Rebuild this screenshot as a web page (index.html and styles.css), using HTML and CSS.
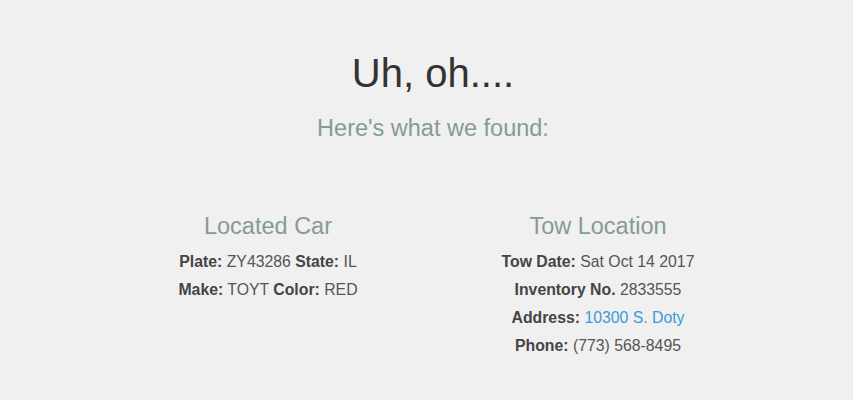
FILE: index.html
```html
<!DOCTYPE html>
<html>
<head>
<meta charset="utf-8">
<link rel="stylesheet" href="styles.css">
</head>
<body>
<main class="page">
  <h1 class="title">Uh, oh....</h1>
  <h2 class="subtitle">Here's what we found:</h2>
  <div class="columns">
    <section class="col">
      <h3 class="col-title">Located Car</h3>
      <p class="line"><b>Plate:</b> ZY43286 <b>State:</b> IL</p>
      <p class="line"><b>Make:</b> TOYT <b>Color:</b> RED</p>
    </section>
    <section class="col">
      <h3 class="col-title">Tow Location</h3>
      <p class="line"><b>Tow Date:</b> Sat Oct 14 2017</p>
      <p class="line"><b>Inventory No.</b> 2833555</p>
      <p class="line"><b>Address:</b> <a class="link" href="#">10300 S. Doty</a></p>
      <p class="line"><b>Phone:</b> (773) 568-8495</p>
    </section>
  </div>
</main>
</body>
</html>
```

FILE: styles.css
```css
html, body {
  margin: 0;
  padding: 0;
  background: #f0f0f0;
}
body {
  font-family: "Liberation Sans", Arial, sans-serif;
  color: #555;
}
.page {
  width: 660px;
  margin: 0 auto;
  padding: 45px 0 0 13px;
  text-align: center;
}
.title {
  margin: 0;
  font-size: 40px;
  font-weight: 300;
  line-height: 56px;
  color: #333;
}
.subtitle {
  margin: 12px 0 0;
  font-size: 23.5px;
  font-weight: 300;
  line-height: 30px;
  color: #869a98;
}
.columns {
  display: grid;
  grid-template-columns: 1fr 1fr;
  margin-top: 68px;
}
.col-title {
  margin: 0 0 7px;
  font-size: 23.5px;
  font-weight: 300;
  line-height: 30px;
  color: #869a98;
}
.line {
  margin: 0;
  font-size: 15.8px;
  line-height: 28px;
  color: #555;
}
.line b {
  color: #444;
}
.link {
  color: #3b9ad9;
  text-decoration: none;
}
```
